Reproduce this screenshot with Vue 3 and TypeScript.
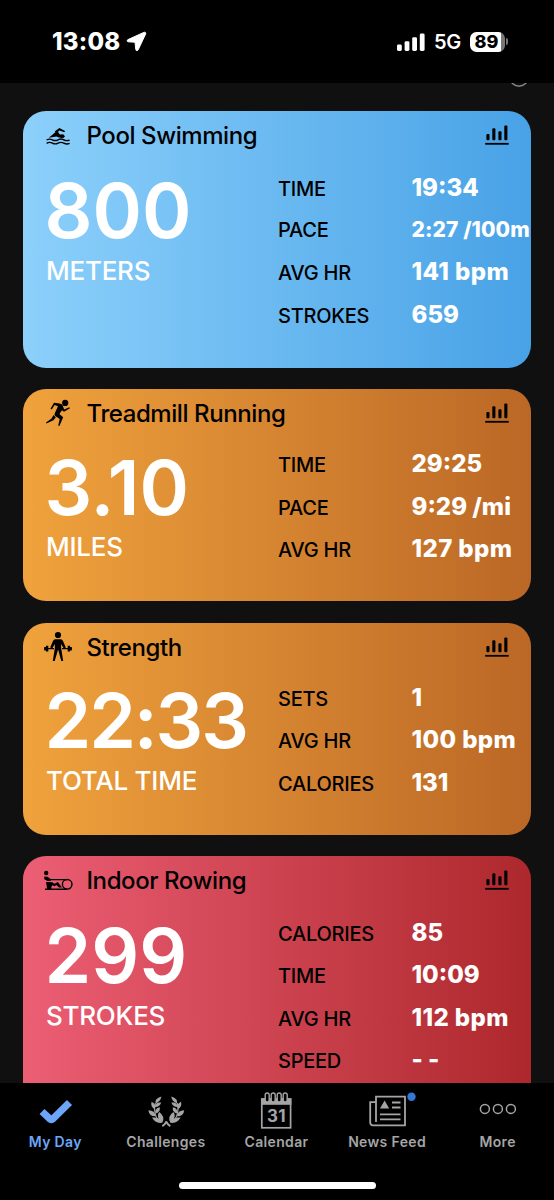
<script setup lang="ts">
interface Stat { label: string; value: string; small?: boolean }
interface Activity {
  kind: 'swim' | 'run' | 'strength' | 'row'
  title: string
  total: string
  unit: string
  tall: boolean
  stats: Stat[]
}

const activities: Activity[] = [
  {
    kind: 'swim', title: 'Pool Swimming', total: '800', unit: 'METERS', tall: true,
    stats: [
      { label: 'TIME', value: '19:34' },
      { label: 'PACE', value: '2:27 /100m', small: true },
      { label: 'AVG HR', value: '141 bpm' },
      { label: 'STROKES', value: '659' },
    ],
  },
  {
    kind: 'run', title: 'Treadmill Running', total: '3.10', unit: 'MILES', tall: false,
    stats: [
      { label: 'TIME', value: '29:25' },
      { label: 'PACE', value: '9:29 /mi' },
      { label: 'AVG HR', value: '127 bpm' },
    ],
  },
  {
    kind: 'strength', title: 'Strength', total: '22:33', unit: 'TOTAL TIME', tall: false,
    stats: [
      { label: 'SETS', value: '1' },
      { label: 'AVG HR', value: '100 bpm' },
      { label: 'CALORIES', value: '131' },
    ],
  },
  {
    kind: 'row', title: 'Indoor Rowing', total: '299', unit: 'STROKES', tall: true,
    stats: [
      { label: 'CALORIES', value: '85' },
      { label: 'TIME', value: '10:09' },
      { label: 'AVG HR', value: '112 bpm' },
      { label: 'SPEED', value: '- -' },
    ],
  },
]
</script>

<template>
  <div class="phone">
    <header class="status">
      <div class="clock">
        <span>13:08</span>
        <svg width="21" height="21" viewBox="0 0 21 21"><path d="M17.8 1.4 2 8.6C.7 9.3 1 10.7 2.2 10.8L9 11.2 9.8 18.6C10 20 11.6 20.1 12.2 18.8L19.6 3C20.2 1.7 19.2.8 17.8 1.4z" fill="#fff" stroke="#fff" stroke-width="1" stroke-linejoin="round" /></svg>
      </div>
      <div class="indicators">
        <svg width="28" height="20" viewBox="0 0 28 20" fill="#fff">
          <rect x="0" y="12.5" width="4.8" height="6.5" rx="1.4" /><rect x="7.6" y="9.2" width="4.8" height="9.8" rx="1.4" />
          <rect x="15.2" y="5.2" width="4.8" height="13.8" rx="1.4" /><rect x="22.8" y="1.5" width="4.8" height="17.5" rx="1.4" />
        </svg>
        <span class="network">5G</span>
        <div class="battery"><span>89</span></div>
        <i class="nub"></i>
      </div>
    </header>

    <main class="feed">
      <svg class="info" width="20" height="6" viewBox="0 0 20 6"><circle cx="10" cy="-6" r="9.2" fill="none" stroke="#888" stroke-width="1.4" /></svg>
      <section v-for="a in activities" :key="a.kind" class="card" :class="[a.kind, { tall: a.tall }]">
        <div class="head">
          <svg v-if="a.kind === 'swim'" class="sport" width="30" height="30" viewBox="0 -1.7 30 30">
            <path d="M5.8 16 12.3 10.6 11.9 9.6 16.4 6.4 22 9.3 21.4 10.6 16.5 8.9 14.9 10.2 17.8 13.8 16.4 16 13.5 14.9z" />
            <ellipse cx="19" cy="14.5" rx="2.6" ry="1.9" />
            <path class="line" d="M3.6 18.3q3-1.7 5.8-.2t5.7 0 5.7 0 5.8.3M3.6 21.6q3-1.7 5.8-.2t5.7 0 5.7 0 5.8.3" />
          </svg>
          <svg v-else-if="a.kind === 'run'" class="sport" width="30" height="30" viewBox="0 0 30 30">
            <circle cx="22.2" cy="4.9" r="3.1" />
            <path d="M11 4.8 16.6 5.6Q20 6.2 20 8.6L21.2 11.4 26.3 9.2 26.9 10.3 21 13.8 19 12.3 16.4 16 20.2 19.3 16.4 28 15.2 27.5 16.7 20.9 12.2 18 Q10.8 17 12 14.8L15 8.2 11.6 7 8.7 11.5 7.5 10.7z" />
            <path d="M10.6 17 12.8 19.5 10.4 22.2 3.4 25.5 3 24.6 8.3 20.8z" />
          </svg>
          <svg v-else-if="a.kind === 'strength'" class="sport" width="30" height="32" viewBox="0 0 30 32">
            <circle cx="15" cy="4" r="3.1" />
            <path d="M12.2 8.2h5.6Q19.3 8.4 20 10L22.8 16.6 20.8 17.6 18.2 12.9 18.1 16.8 20.2 30H18.3L15.1 18.5 11.7 30H9.8L11.9 16.8 11.8 12.9 9.2 17.6 7.2 16.6 10 10Q10.7 8.4 12.2 8.2z" />
            <path class="line" d="M1 17.6H11M19 17.6H29" />
            <path d="M3 14.8h2.3v5.6H3zM1.2 16h2v3.4h-2zM24.7 14.8H27v5.6h-2.3zM26.8 16h2v3.4h-2z" />
          </svg>
          <svg v-else class="sport" width="30" height="30" viewBox="0 -1.6 30 30">
            <circle cx="3.2" cy="6.4" r="2.2" />
            <path d="M1.2 10 4.6 10.2 7.6 12.4V14.3H4.6L1.3 12.7zM3 15.4 9.2 15.6 11.6 17.2 14.8 15.4 19 21H16L13.4 18.4 11.5 19.7 9.2 18.6 8.3 21V22.4H4.2z" />
            <path class="line" d="M7 13H24M2 22.6H24" /><circle class="line" cx="24.2" cy="17.7" r="4.8" />
          </svg>
          <h2>{{ a.title }}</h2>
          <svg class="chart" width="24" height="22" viewBox="0 0 24 22">
            <rect x="1.4" y="10" width="3.1" height="6.3" rx="1" /><rect x="7.3" y="4.2" width="3.1" height="12.1" rx="1" />
            <rect x="13.4" y="7.2" width="3.1" height="9.1" rx="1" /><rect x="19.3" y="1.5" width="3.1" height="14.8" rx="1" />
            <rect x=".2" y="18.9" width="23.5" height="1.8" />
          </svg>
        </div>
        <div class="body">
          <div class="total">
            <strong>{{ a.total }}</strong>
            <span>{{ a.unit }}</span>
          </div>
          <dl>
            <div v-for="s in a.stats" :key="s.label" class="stat">
              <dt>{{ s.label }}</dt>
              <dd :class="{ small: s.small, rate: s.value.endsWith('bpm') }">{{ s.value }}</dd>
            </div>
          </dl>
        </div>
      </section>
    </main>

    <footer class="bottom">
      <nav>
        <a class="tab active">
          <svg width="40" height="38" viewBox="0 0 40 38"><path d="M7 20.5 14.6 27.7Q16.3 29.2 18 27.7L34.5 11.5" fill="none" stroke="#6da6f8" stroke-width="7.2" stroke-linejoin="round" /></svg>
          <span>My Day</span>
        </a>
        <a class="tab">
          <svg width="40" height="38" viewBox="0 0 40 38" fill="#a5a5a5">
            <g id="branch">
              <path d="M15.4 5.6Q8.4 7.6 9.6 12.4 14.6 10.6 15.4 5.6zM15.2 11.6Q9.6 10.9 8.8 16 13.8 16.2 15.2 11.6zM5.6 10.8Q4.2 15.6 8.6 18.2 11 13.4 5.6 10.8zM13.8 16.2Q8.2 17.4 9.5 22.6 14.4 21.2 13.8 16.2zM2.4 19.2Q3 25.6 10 25.2 8.8 19.2 2.4 19.2zM13.2 21Q9.2 25.6 16.2 31.4 19.6 25.6 13.2 21zM6 26.6Q9.6 33.2 16.8 31.6 13 25.4 6 26.6z" />
              <path d="M9.4 12Q7.8 16.5 9.2 22.5T14 30" fill="none" stroke="#a5a5a5" stroke-width="1.1" />
              <path d="M16.3 35.2Q18.6 34 20.6 30.6" fill="none" stroke="#a5a5a5" stroke-width="2" />
            </g>
            <use href="#branch" transform="translate(40.6 0) scale(-1 1)" />
          </svg>
          <span>Challenges</span>
        </a>
        <a class="tab">
          <svg width="40" height="38" viewBox="0 0 40 38">
            <rect x="5.8" y="8" width="28.8" height="28.8" fill="none" stroke="#a5a5a5" stroke-width="1.7" />
            <path d="M5 7.5h30.4v6.3H5z" fill="#a5a5a5" />
            <g fill="#000" stroke="#a5a5a5" stroke-width="1.4"><rect x="9.2" y="2" width="4" height="9" rx="2" /><rect x="15.2" y="2" width="4" height="9" rx="2" /><rect x="21.2" y="2" width="4" height="9" rx="2" /><rect x="27.2" y="2" width="4" height="9" rx="2" /></g>
            <text x="20.5" y="31" text-anchor="middle" class="date">31</text>
          </svg>
          <span>Calendar</span>
        </a>
        <a class="tab">
          <svg width="40" height="38" viewBox="0 0 40 38" fill="none" stroke="#a5a5a5" stroke-width="1.8">
            <path d="M9 31V5.6H38V34.4H6Q3.2 34.4 3.2 31.5V11.2H9" />
            <path d="M13 23.3H33.5M13 28.3H33.5M25 11.5H33.5M25 16.5H33.5" /><path d="M17.6 9.6 22.2 17.6H13z" fill="#a5a5a5" stroke="none" />
            <circle cx="44.5" cy="5.8" r="4.2" fill="#3478d6" stroke="none" />
          </svg>
          <span>News Feed</span>
        </a>
        <a class="tab">
          <svg width="40" height="38" viewBox="0 0 40 38" fill="none" stroke="#a5a5a5" stroke-width="1.5"><circle cx="6.9" cy="17.9" r="4.5" /><circle cx="19.9" cy="17.9" r="4.5" /><circle cx="32.9" cy="17.9" r="4.5" /></svg>
          <span>More</span>
        </a>
      </nav>
      <i class="home"></i>
    </footer>
  </div>
</template>

<style>
body { margin: 0; background: #000; }
</style>

<style scoped>
* { box-sizing: border-box; }
.phone { width: 554px; height: 1200px; display: flex; flex-direction: column; overflow: hidden; background: #000; font-family: Inter, "Liberation Sans", sans-serif; color: #fff; }
.status { height: 83px; flex: none; display: flex; justify-content: space-between; padding: 0 46px 0 52px; }
.clock, .indicators { display: flex; align-items: center; height: 83px; }
.clock { gap: 6px; font-size: 24px; font-weight: 800; letter-spacing: .2px; }
.network { font-size: 20px; font-weight: 600; margin: 1px 9px 0 9px; letter-spacing: -.3px; }
.battery { width: 35px; height: 20px; border-radius: 6.5px; background: linear-gradient(90deg, #fff 89%, #777 89%); display: flex; align-items: center; justify-content: center; padding-right: 2px; color: #000; font-size: 18px; font-weight: 800; }
.nub { width: 2px; height: 7px; margin-left: 1px; border-radius: 0 2px 2px 0; background: #777; }
.feed { position: relative; height: 1000px; flex: none; overflow: hidden; background: #101010; padding: 28.3px 23px 0; display: flex; flex-direction: column; gap: 21.4px; }
.info { position: absolute; right: 25px; top: 0; }
.card { flex: none; height: 212.3px; border-radius: 23px; color: #000; }
.card.tall { height: 256.3px; }
.swim { background: linear-gradient(90deg, #8cd0fb, #48a2e6); }
.run, .strength { background: linear-gradient(90deg, #f0a23c, #bb6726); }
.row { background: linear-gradient(90deg, #ec5e74, #ad282c); }
.head { height: 48px; display: flex; align-items: center; padding: 0 22px 0 20px; }
.sport { flex: none; fill: #000; margin-right: 13.5px; }
.line { fill: none; stroke: #000; stroke-width: 1.4; }
h2 { margin: 0; padding-top: 2px; font-size: 24px; line-height: 46px; font-weight: 530; letter-spacing: -.42px; flex: 1; white-space: nowrap; }
.chart { fill: #000; }
.body { display: grid; grid-template-columns: 232px 1fr; padding-left: 23px; margin-top: -1.3px; }
.tall .body { margin-top: 0; }
.total { display: flex; flex-direction: column; padding-top: 12px; color: #fff; }
.total strong { margin-left: -1.5px; font-size: 75px; line-height: 80px; font-weight: 570; white-space: nowrap; }
.strength .total strong { letter-spacing: -2.1px; }
.total span { margin-top: 3.5px; font-size: 26px; line-height: 32px; font-weight: 500; letter-spacing: -.25px; white-space: nowrap; }
dl { margin: 0; padding-top: 7.8px; }
.stat { height: 42.2px; display: grid; grid-template-columns: 133.5px 1fr; align-items: baseline; line-height: 42.2px; white-space: nowrap; }
dt { font-size: 20px; font-weight: 500; letter-spacing: -.25px; }
dd { margin: 0; color: #fff; font-size: 24px; font-weight: 800; }
dd.small { font-size: 21px; letter-spacing: .1px; }
dd.rate { letter-spacing: .4px; }
.bottom { flex: 1; display: flex; flex-direction: column; align-items: center; justify-content: space-between; padding-bottom: 11px; }
nav { width: 554px; display: grid; grid-template-columns: repeat(5, 110.6px); }
.tab { display: flex; flex-direction: column; align-items: center; padding-top: 8px; color: #a5a5a5; font-size: 14px; font-weight: 600; letter-spacing: .35px; line-height: 26px; }
.tab svg { overflow: visible; }
.active { color: #6da6f8; }
.date { font: 700 17px Inter, sans-serif; fill: #a5a5a5; }
.home { width: 197px; height: 7px; border-radius: 4px; background: #fff; }
</style>
